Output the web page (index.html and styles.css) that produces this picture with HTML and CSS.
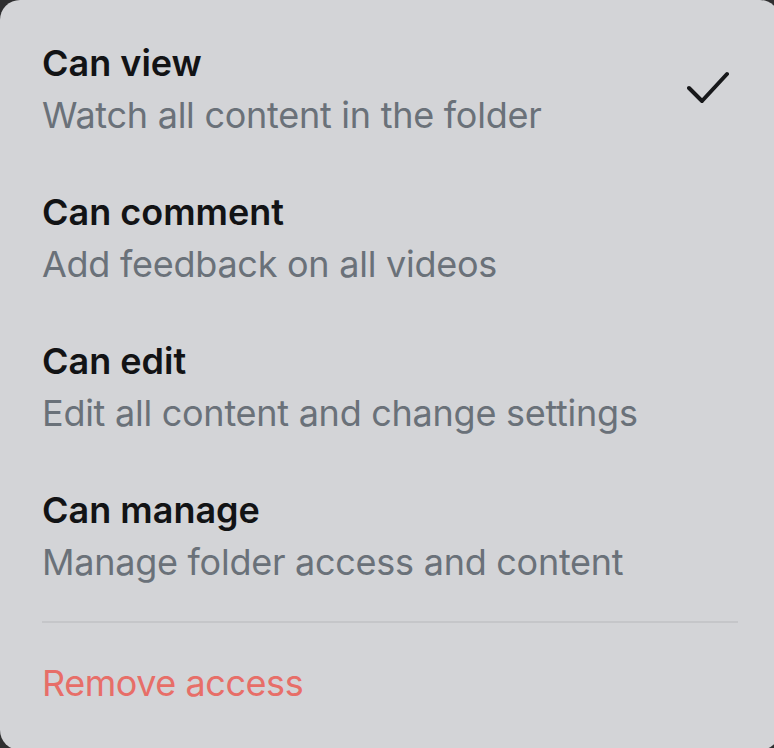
FILE: index.html
```html
<!DOCTYPE html>
<html>
<head>
<meta charset="utf-8">
<link rel="stylesheet" href="styles.css">
</head>
<body>
<div class="menu">
  <div class="item">
    <div class="text">
      <div class="title">Can view</div>
      <div class="desc">Watch all content in the folder</div>
    </div>
    <svg class="check" width="44" height="34" viewBox="0 0 44 34"><path d="M2 17 L15 30 L40 3" fill="none" stroke="#17181a" stroke-width="4" stroke-linecap="round" stroke-linejoin="round"/></svg>
  </div>
  <div class="item">
    <div class="text">
      <div class="title">Can comment</div>
      <div class="desc">Add feedback on all videos</div>
    </div>
  </div>
  <div class="item">
    <div class="text">
      <div class="title">Can edit</div>
      <div class="desc">Edit all content and change settings</div>
    </div>
  </div>
  <div class="item">
    <div class="text">
      <div class="title">Can manage</div>
      <div class="desc">Manage folder access and content</div>
    </div>
  </div>
  <div class="divider"></div>
  <div class="remove">Remove access</div>
</div>
</body>
</html>
```
FILE: styles.css
```css
html, body {
  margin: 0;
  padding: 0;
  background: #2f2f30;
  overflow: hidden;
}
.menu {
  width: 780px;
  height: 750px;
  box-sizing: border-box;
  background: #d3d4d7;
  border-radius: 20px;
  padding: 37px 42px 0 42px;
  font-family: Inter, "Noto Sans", sans-serif;
  display: flex;
  flex-direction: column;
  gap: 45px;
}
.item {
  display: flex;
  justify-content: space-between;
  align-items: flex-start;
}
.text {
  display: flex;
  flex-direction: column;
}
.title {
  font-size: 36px;
  line-height: 52px;
  font-weight: 600;
  color: #121315;
}
.desc {
  font-size: 36px;
  line-height: 52px;
  font-weight: 400;
  color: #6a7179;
  letter-spacing: -0.26px;
}
.check {
  margin-top: 34px;
  margin-right: 7px;
}
.divider {
  height: 2px;
  background: #c5c6c9;
  margin-top: -12px;
}
.remove {
  font-size: 36px;
  line-height: 52px;
  color: #e76e68;
  margin-top: -11px;
  letter-spacing: -0.45px;
}
```
